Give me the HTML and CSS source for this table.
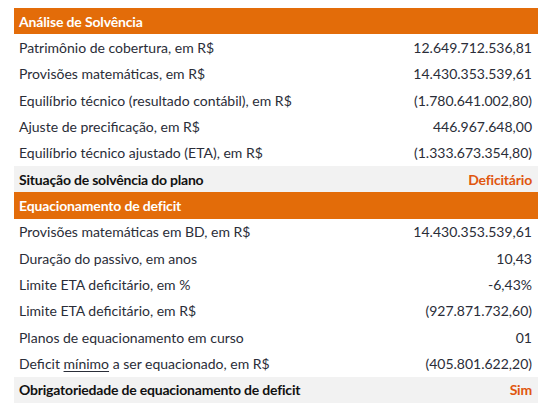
FILE: index.html
```html
<!DOCTYPE html>
<html lang="pt-BR">
<head>
<meta charset="utf-8">
<link rel="stylesheet" href="styles.css">
</head>
<body>
<div class="table">
  <div class="row head"><span>Análise de Solvência</span></div>
  <div class="row"><span>Patrimônio de cobertura, em R$</span><span>12.649.712.536,81</span></div>
  <div class="row"><span>Provisões matemáticas, em R$</span><span>14.430.353.539,61</span></div>
  <div class="row"><span>Equilíbrio técnico (resultado contábil), em R$</span><span>(1.780.641.002,80)</span></div>
  <div class="row"><span>Ajuste de precificação, em R$</span><span>446.967.648,00</span></div>
  <div class="row"><span>Equilíbrio técnico ajustado (ETA), em R$</span><span>(1.333.673.354,80)</span></div>
  <div class="row total"><span>Situação de solvência do plano</span><span class="status">Deficitário</span></div>
  <div class="row head"><span>Equacionamento de deficit</span></div>
  <div class="row"><span>Provisões matemáticas em BD, em R$</span><span>14.430.353.539,61</span></div>
  <div class="row"><span>Duração do passivo, em anos</span><span>10,43</span></div>
  <div class="row"><span>Limite ETA deficitário, em %</span><span>-6,43%</span></div>
  <div class="row"><span>Limite ETA deficitário, em R$</span><span>(927.871.732,60)</span></div>
  <div class="row"><span>Planos de equacionamento em curso</span><span>01</span></div>
  <div class="row"><span>Deficit <u>mínimo</u> a ser equacionado, em R$</span><span>(405.801.622,20)</span></div>
  <div class="row total"><span>Obrigatoriedade de equacionamento de deficit</span><span class="status">Sim</span></div>
</div>
</body>
</html>
```
FILE: styles.css
```css
html, body { margin: 0; padding: 0; background: #fff; }
body { padding: 8px 21px 0 14px; }
.table {
  font-family: Lato, "Open Sans", sans-serif;
  font-size: 14px;
  color: #2a2d38;
}
.row {
  height: 26.33px;
  display: flex;
  justify-content: space-between;
  align-items: center;
  padding: 0 6px 0 5px;
  box-sizing: border-box;
}
.head {
  background: #e36c09;
  color: #fff;
  font-weight: 700;
  letter-spacing: -0.15px;
}
.total {
  background: #f2f2f2;
  color: #111;
  font-weight: 700;
  letter-spacing: -0.2px;
}
.status { color: #e0560e; }
u { text-underline-offset: 2px; }
```
